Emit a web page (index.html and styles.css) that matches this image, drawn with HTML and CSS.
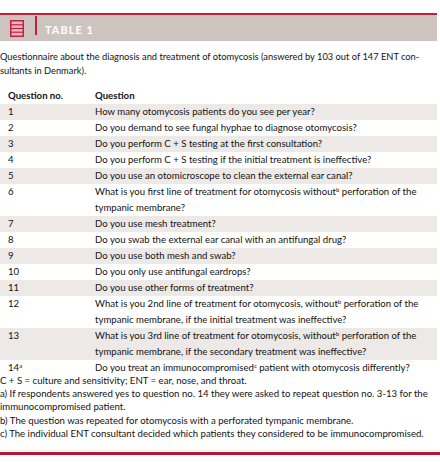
FILE: index.html
```html
<!DOCTYPE html>
<html>
<head>
<meta charset="utf-8">
<link rel="stylesheet" href="styles.css">
</head>
<body>
<div class="frame">
  <div class="header">
    <svg class="icon" width="14" height="17" viewBox="0 0 14 17">
      <rect x="0.75" y="0.75" width="12.5" height="15.5" fill="#e7b9c2" stroke="#c0213f" stroke-width="1.5"/>
      <line x1="1" y1="4.8" x2="13" y2="4.8" stroke="#c0213f" stroke-width="1.2"/>
      <line x1="1" y1="8.5" x2="13" y2="8.5" stroke="#c0213f" stroke-width="1.2"/>
      <line x1="1" y1="12.2" x2="13" y2="12.2" stroke="#c0213f" stroke-width="1.2"/>
    </svg>
    <span class="divider"></span>
    <span class="title">TABLE 1</span>
  </div>
  <p class="intro">Questionnaire about the diagnosis and treatment of otomycosis (answered by 103 out of 147 ENT con-<br>sultants in Denmark).</p>
  <table class="qtable">
    <thead>
      <tr><th class="no">Question no.</th><th>Question</th></tr>
    </thead>
    <tbody>
      <tr class="alt"><td class="no">1</td><td>How many otomycosis patients do you see per year?</td></tr>
      <tr><td class="no">2</td><td>Do you demand to see fungal hyphae to diagnose otomycosis?</td></tr>
      <tr class="alt"><td class="no">3</td><td>Do you perform C + S testing at the first consultation?</td></tr>
      <tr><td class="no">4</td><td>Do you perform C + S testing if the initial treatment is ineffective?</td></tr>
      <tr class="alt"><td class="no">5</td><td>Do you use an otomicroscope to clean the external ear canal?</td></tr>
      <tr><td class="no">6</td><td>What is you first line of treatment for otomycosis without<sup>b</sup> perforation of the<br>tympanic membrane?</td></tr>
      <tr class="alt"><td class="no">7</td><td>Do you use mesh treatment?</td></tr>
      <tr><td class="no">8</td><td>Do you swab the external ear canal with an antifungal drug?</td></tr>
      <tr class="alt"><td class="no">9</td><td>Do you use both mesh and swab?</td></tr>
      <tr><td class="no">10</td><td>Do you only use antifungal eardrops?</td></tr>
      <tr class="alt"><td class="no">11</td><td>Do you use other forms of treatment?</td></tr>
      <tr><td class="no">12</td><td>What is you 2nd line of treatment for otomycosis, without<sup>b</sup> perforation of the<br>tympanic membrane, if the initial treatment was ineffective?</td></tr>
      <tr class="alt"><td class="no">13</td><td>What is you 3rd line of treatment for otomycosis, without<sup>b</sup> perforation of the<br>tympanic membrane, if the secondary treatment was ineffective?</td></tr>
      <tr><td class="no">14<sup>a</sup></td><td>Do you treat an immunocompromised<sup>c</sup> patient with otomycosis differently?</td></tr>
    </tbody>
  </table>
  <div class="notes">
    <p>C + S = culture and sensitivity; ENT = ear, nose, and throat.</p>
    <p>a) If respondents answered yes to question no. 14 they were asked to repeat question no. 3-13 for the<br>immunocompromised patient.</p>
    <p>b) The question was repeated for otomycosis with a perforated tympanic membrane.</p>
    <p>c) The individual ENT consultant decided which patients they considered to be immunocompromised.</p>
  </div>
  <div class="bottom"></div>
</div>
</body>
</html>
```

FILE: styles.css
```css
html, body {
  margin: 0;
  padding: 0;
  background: #ffffff;
}
body {
  font-family: Lato, "Open Sans", "Liberation Sans", sans-serif;
  font-size: 9.6px;
  color: #141213;
}
.frame {
  width: 440px;
  padding-top: 13px;
}
.header {
  border-top: 2px solid #c0213f;
  background: #cdc4bf;
  height: 26px;
  display: flex;
  align-items: center;
  width: 437px;
}
.icon {
  margin-left: 10px;
  display: block;
}
.divider {
  width: 2px;
  height: 19px;
  background: #c0213f;
  margin-left: 11px;
  margin-top: -5px;
}
.title {
  color: #ffffff;
  font-weight: 700;
  font-size: 11px;
  letter-spacing: 1px;
  margin-left: 8px;
  margin-top: 3px;
}
.intro {
  margin: 9px 0 0 0;
  line-height: 14px;
  font-size: 9.3px;
  white-space: nowrap;
}
.qtable {
  margin-top: 10px;
  width: 437px;
  border-collapse: collapse;
  line-height: 16px;
}
.qtable th, .qtable td {
  padding: 0;
  text-align: left;
  vertical-align: top;
  white-space: nowrap;
}
.qtable th {
  font-weight: 700;
  height: 16px;
}
.qtable .no {
  width: 87px;
  padding-left: 8px;
}
.qtable tr.alt td {
  background: #ece9e7;
}
sup {
  font-size: 6px;
  line-height: 0;
  vertical-align: 3px;
}
.notes {
  margin-top: -2px;
  line-height: 13.2px;
  white-space: nowrap;
}
.notes p {
  margin: 0;
}
.bottom {
  margin-top: 10px;
  border-top: 1px solid #f1eeee;
  height: 4px;
  background: #b5163a;
  box-shadow: inset 0 1px 0 #ffffff;
}
```
